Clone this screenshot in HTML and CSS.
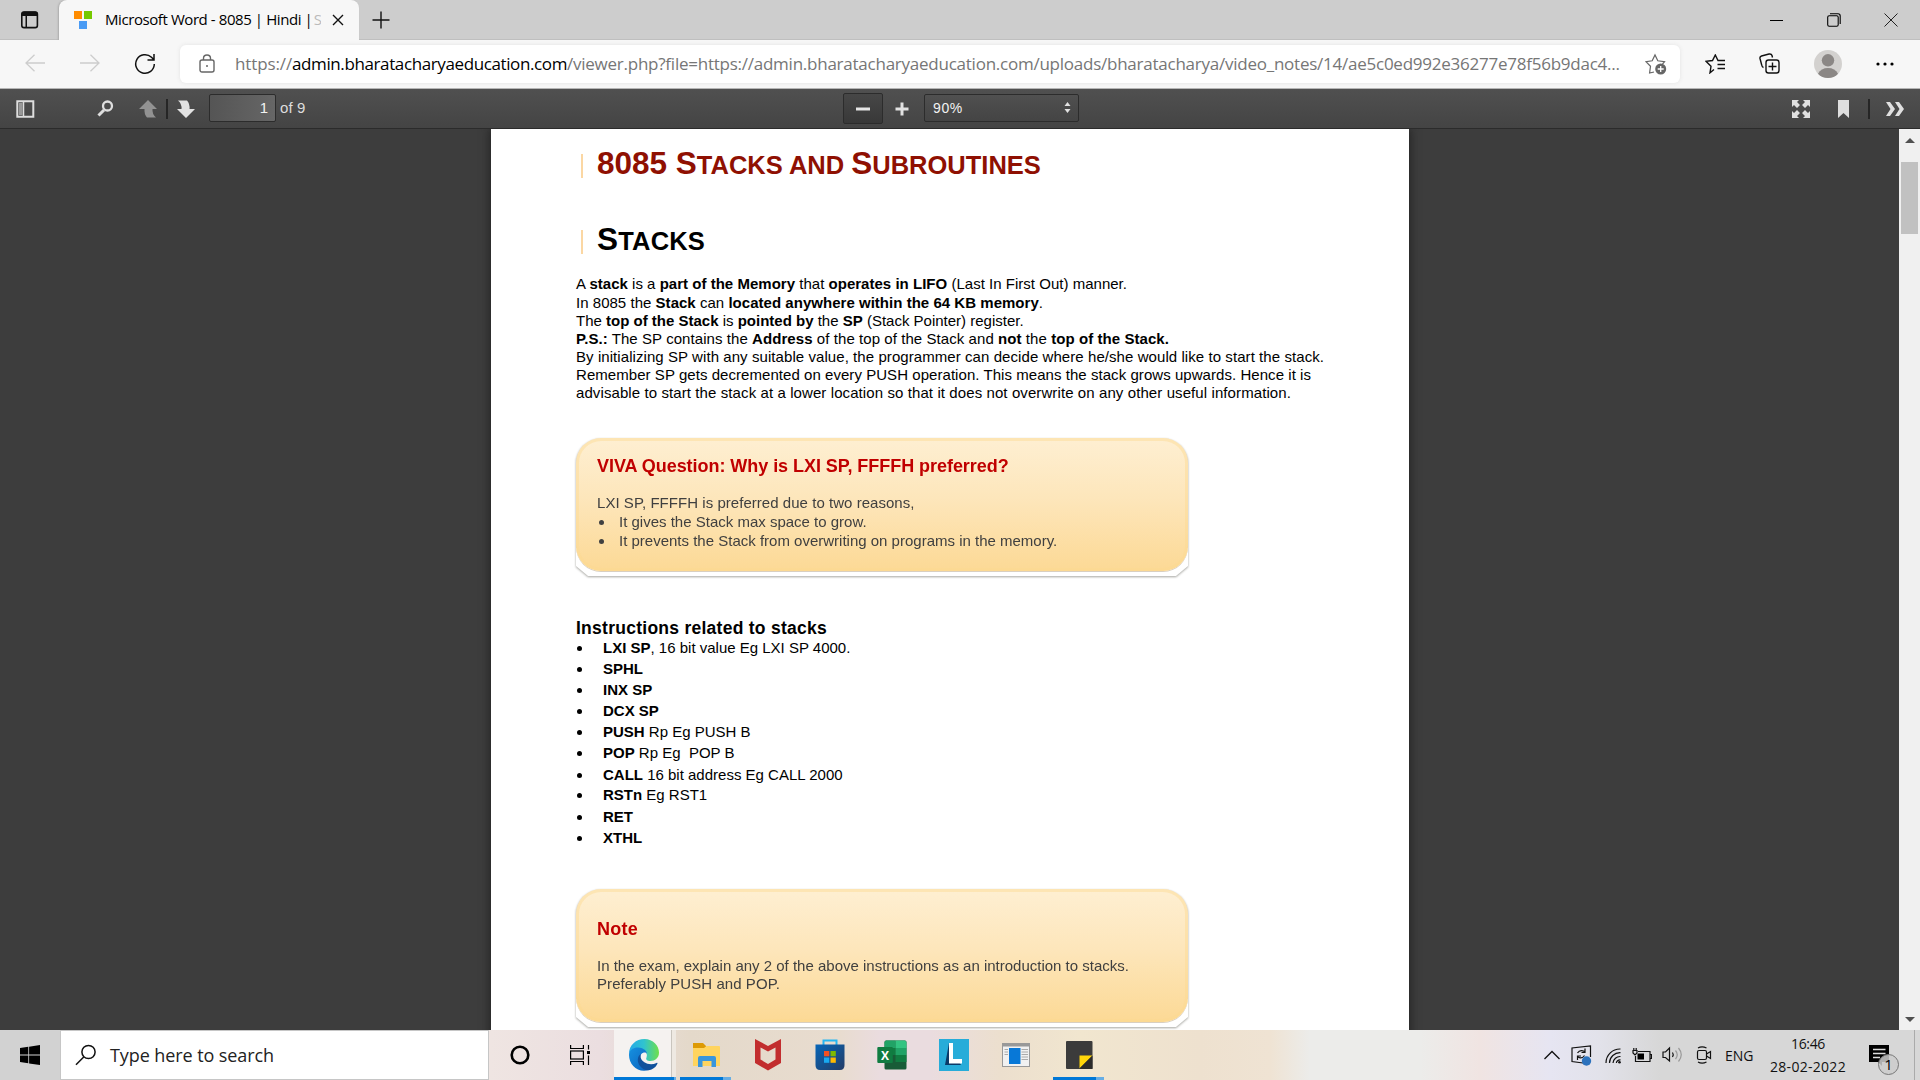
FILE: index.html
```html
<!DOCTYPE html>
<html lang="en">
<head>
<meta charset="utf-8">
<title>Microsoft Word - 8085 | Hindi</title>
<link rel="stylesheet" href="styles.css">
</head>
<body>
<div class="screen">
  <header class="tabstrip">
    <svg class="tab-actions" width="20" height="20" viewBox="0 0 20 20"><rect x="1.8" y="2" width="15.6" height="15.6" rx="2.2" fill="none" stroke="#111" stroke-width="1.6"/><path d="M1.5 3.5Q1.5 1.5 4 1.5H15Q17.8 1.5 17.8 4V6H1.5ZM5.5 6H7V17H5.5Z" fill="#111"/></svg>
    <div class="tab">
      <svg width="20" height="20" viewBox="0 0 20 20"><rect x="1" y="1" width="8" height="8" fill="#ff8c00"/><rect x="11" y="1" width="8" height="8" fill="#76c900"/><rect x="6" y="11" width="8" height="8" fill="#4a9bf4"/></svg>
      <span class="tab-title">Microsoft Word - 8085 | Hindi | <i>S</i></span>
      <svg width="12" height="12" viewBox="0 0 12 12" stroke="#111" stroke-width="1.4"><path d="M1 1L11 11M11 1L1 11"/></svg>
    </div>
    <svg class="new-tab" width="18" height="18" viewBox="0 0 18 18" stroke="#111" stroke-width="1.4"><path d="M9 .5V17.5M.5 9H17.5"/></svg>
    <div class="window-buttons">
      <svg width="14" height="14" viewBox="0 0 14 14" stroke="#000"><path d="M0 7.5H13"/></svg>
      <svg width="14" height="14" viewBox="0 0 14 14" fill="none" stroke="#000" stroke-width="1.1"><rect x=".7" y="2.7" width="10.5" height="10.5" rx="1.5"/><path d="M3 .7H11Q13.2 .7 13.2 3V11"/></svg>
      <svg width="14" height="14" viewBox="0 0 14 14" stroke="#222"><path d="M.5 .5L13.5 13.5M13.5 .5L.5 13.5"/></svg>
    </div>
  </header>

  <nav class="navbar">
    <svg class="back" width="20" height="18" viewBox="0 0 20 18" fill="none" stroke="#cdcdcd" stroke-width="1.3"><path d="M20 9H1M9.500 .7L1 9L9.500 17.300"/></svg>
    <svg class="forward" width="20" height="18" viewBox="0 0 20 18" fill="none" stroke="#cdcdcd" stroke-width="1.300"><path d="M0 9H19M10.500 .7L19 9L10.500 17.300"/></svg>
    <svg class="reload" width="22" height="22" viewBox="0 0 22 22" fill="none" stroke="#111" stroke-width="1.500"><path d="M20.300 11A9.300 9.300 0 1 1 17.500 4.300L19.700 6.500M20 1V7H13.500"/></svg>
    <div class="address">
      <svg class="lock" width="16" height="19" viewBox="0 0 16 19" fill="none" stroke="#666" stroke-width="1.400"><rect x="1" y="6" width="14" height="12" rx="2"/><path d="M4.500 6V4.300Q4.500 1 8 1T11.500 4.300V6"/><circle cx="8" cy="12" r="1" fill="#666" stroke="none"/></svg>
      <div class="url"><span class="u1">https://</span><span class="u2">admin.bharatacharyaeducation.com</span><span class="u3">/viewer.php?file=https://admin.bharatacharyaeducation.com/uploads/bharatacharya/video_notes/14/ae5c0ed992e36277e78f56b9dac4...</span></div>
      <svg class="fav" width="22" height="22" viewBox="0 0 22 22"><path d="M9 19L4.600 20L5.500 13.300L1 8.700L7.200 7.800L10 2L12.800 7.800L19.500 8.700L17.500 11" fill="none" stroke="#666" stroke-width="1.200"/><circle cx="15.700" cy="16" r="5.500" fill="#666"/><path d="M15.700 13V19M12.700 16H18.700" stroke="#fff" stroke-width="1.300"/></svg>
    </div>
    <svg class="favorites" width="21" height="20" viewBox="0 0 21 20" fill="none" stroke="#111" stroke-width="1.400"><path d="M9 15.500L5 18.800L6 12.300L1 7.300L7.500 6.500L10.300 1L13 6.500H20M12.500 10.500H20M12.500 14.500H20"/></svg>
    <svg class="collections" width="21" height="21" viewBox="0 0 21 21" fill="none" stroke="#111" stroke-width="1.400"><rect x="7" y="7" width="13" height="13" rx="2.500"/><path d="M13.500 9.500V17.500M9.500 13.500H17.500M4.500 14.500Q3 14 2.700 12L1 5.500Q.6 3.500 2.500 3L10 1Q12.500 .6 13 2.500L13.500 4.500"/></svg>
    <svg class="avatar" width="28" height="28" viewBox="0 0 28 28"><circle cx="14" cy="14" r="14" fill="#d3d1cf"/><circle cx="14" cy="10.300" r="6.200" fill="#8b8785"/><path d="M4 23.700Q7 18 14 18T24 23.700Q20 28 14 28T4 23.700" fill="#8b8785"/></svg>
    <svg class="more" width="18" height="4" viewBox="0 0 18 4"><circle cx="2" cy="2" r="1.600"/><circle cx="9" cy="2" r="1.600"/><circle cx="16" cy="2" r="1.600"/></svg>
  </nav>

  <div class="toolbar">
    <svg class="t-side" width="19" height="18" viewBox="0 0 19 18"><path d="M1.300 1.300H17.300V16.700H1.300Z" fill="none" stroke="#dedede" stroke-width="2"/><path d="M3 3H6.500V15H3Z" fill="#999"/><path d="M7.500 2V16" stroke="#dedede" stroke-width="1.500"/></svg>
    <svg class="t-find" width="17" height="17" viewBox="0 0 17 17" fill="none" stroke="#dedede"><circle cx="10.500" cy="6" r="4.500" stroke-width="2.300"/><path d="M7 10L1.500 15.500" stroke-width="3"/></svg>
    <svg class="t-up" width="18" height="18" viewBox="0 0 18 18"><path d="M9 0L18 9H13.500Q13 14 17 17.500H8Q5 14 5.500 9H0Z" fill="#929292"/></svg>
    <i class="t-sep"></i>
    <svg class="t-down" width="18" height="18" viewBox="0 0 18 18"><path d="M9 18L0 9H4.500Q5 4 1 .5H10Q13 4 12.500 9H18Z" fill="#e2e2e2"/></svg>
    <div class="page-number">1</div>
    <span class="page-count">of 9</span>
    <div class="zoom-out"><svg width="14" height="4"><rect width="14" height="3" y=".5" fill="#e6e6e6"/></svg></div>
    <svg class="zoom-in" width="14" height="14" viewBox="0 0 14 14"><path d="M5.500 .5H8.500V5.500H13.500V8.500H8.500V13.500H5.500V8.500H.5V5.500H5.500Z" fill="#e2e2e2"/></svg>
    <div class="scale"><span>90%</span><svg width="7" height="11" viewBox="0 0 7 11"><path d="M3.500 0L6.500 4H.5ZM3.500 11L6.500 7H.5Z" fill="#e2e2e2"/></svg></div>
    <svg class="t-full" width="18" height="18" viewBox="0 0 18 18" fill="#e0e0e0"><path d="M0 0H7L5 2L8 5L5 8L2 5L0 7Z"/><path d="M18 0V7L16 5L13 8L10 5L13 2L11 0Z"/><path d="M18 18H11L13 16L10 13L13 10L16 13L18 11Z"/><path d="M0 18V11L2 13L5 10L8 13L5 16L7 18Z"/></svg>
    <svg class="t-mark" width="11" height="18" viewBox="0 0 11 18"><path d="M0 0H11V18L5.500 13L0 18Z" fill="#dedede"/></svg>
    <i class="t-sep2"></i>
    <svg class="t-more" width="18" height="14" viewBox="0 0 18 14" fill="#e0e0e0"><path d="M0 0H4L9 7L4 14H0L4.500 7ZM9 0H13L18 7L13 14H9L13.500 7Z"/></svg>
  </div>

  <main class="viewer">
    <article class="page">
      <h1><i></i><span>8085 S<small>TACKS AND </small>S<small>UBROUTINES</small></span></h1>
      <h2><i></i><span>S<small>TACKS</small></span></h2>
      <section class="intro">
        <p class="p1">A <b>stack</b> is a <b>part of the Memory</b> that <b>operates in LIFO</b> (Last In First Out) manner.</p>
        <p class="p2">In 8085 the <b>Stack</b> can <b>located anywhere within the 64 KB memory</b>.</p>
        <p>The <b>top of the Stack</b> is <b>pointed by</b> the <b>SP</b> (Stack Pointer) register.</p>
        <p class="p4"><b>P.S.:</b> The SP contains the <b>Address</b> of the top of the Stack and <b>not</b> the <b>top of the Stack.</b></p>
        <p class="p5">By initializing SP with any suitable value, the programmer can decide where he/she would like to start the stack.</p>
        <p class="p6">Remember SP gets decremented on every PUSH operation. This means the stack grows upwards. Hence it is</p>
        <p class="p7">advisable to start the stack at a lower location so that it does not overwrite on any other useful information.</p>
      </section>
      <section class="box viva">
        <h3>VIVA Question: Why is LXI SP, FFFFH preferred?</h3>
        <p>LXI SP, FFFFH is preferred due to two reasons,</p>
        <ul>
          <li>It gives the Stack max space to grow.</li>
          <li>It prevents the Stack from overwriting on programs in the memory.</li>
        </ul>
      </section>
      <h4>Instructions related to stacks</h4>
      <ul class="instructions">
        <li><b>LXI SP</b>, 16 bit value Eg LXI SP 4000.</li>
        <li><b>SPHL</b></li>
        <li><b>INX SP</b></li>
        <li><b>DCX SP</b></li>
        <li><b>PUSH</b> Rp Eg PUSH B</li>
        <li><b>POP</b> Rp Eg&nbsp; POP B</li>
        <li class="call"><b>CALL</b> 16 bit address Eg CALL 2000</li>
        <li class="rst"><b>RSTn</b> Eg RST1</li>
        <li class="ret"><b>RET</b></li>
        <li><b>XTHL</b></li>
      </ul>
      <section class="box note">
        <h3>Note</h3>
        <p>In the exam, explain any 2 of the above instructions as an introduction to stacks.</p>
        <p class="last">Preferably PUSH and POP.</p>
      </section>
    </article>
    <div class="scrollbar">
      <svg width="10" height="5"><path d="M0 5L5 0L10 5Z" fill="#505050"/></svg>
      <i></i>
      <svg width="10" height="5"><path d="M0 0L5 5L10 0Z" fill="#505050"/></svg>
    </div>
  </main>

  <footer class="taskbar">
    <div class="start"><svg width="20" height="20" viewBox="0 0 20 20"><path d="M0 3L8.300 1.800V9.600H0ZM9.100 1.700L20 0V9.600H9.100ZM0 10.400H8.300V18.300L0 17.100ZM9.100 10.400H20V20L9.100 18.400Z"/></svg></div>
    <div class="search"><svg width="22" height="22" viewBox="0 0 22 22" fill="none" stroke="#111" stroke-width="1.500"><circle cx="13.500" cy="8" r="6.600"/><path d="M8.700 13L1 20.800"/></svg><span>Type here to search</span></div>
    <div class="cell cortana"><svg width="20" height="20" viewBox="0 0 20 20"><circle cx="10" cy="10" r="8.300" fill="none" stroke="#000" stroke-width="2.600"/></svg></div>
    <div class="cell"><svg width="22" height="20" viewBox="0 0 22 20" fill="none" stroke="#000" stroke-width="1.200"><path d="M1.600 0V3.500H14.400V0M1.600 20V16.500H14.400V20M19.500 0V4.500M19.500 10.500V20"/><rect x="1.600" y="6" width="12.800" height="8"/><path d="M18 6H21V9H18Z" fill="#000" stroke="none"/></svg></div>
    <div class="cell app edge">
      <svg width="32" height="32" viewBox="0 0 32 32"><defs><linearGradient id="ea" x1="0" x2="1"><stop offset="0" stop-color="#25a9e8"/><stop offset=".5" stop-color="#30c3cf"/><stop offset="1" stop-color="#6fe04a"/></linearGradient><linearGradient id="eb" x1="0" x2="1" y1="0" y2="1"><stop offset="0" stop-color="#1691e0"/><stop offset="1" stop-color="#0b61bd"/></linearGradient></defs><path d="M1 15C1 6 8 0 16.500 0C25 0 31 6.500 31 13.500C31 19 27 22 22.500 22C19 22 17.500 20.500 18.500 18.500C20.500 13 15 9 10 9C5 9 2 12 1 15Z" fill="url(#ea)"/><path d="M1 16C1 11 5 8.500 10 8.500C15 8.500 19 11.500 19 15C17 12 12 14 12 19.500C12 26 18 31 21 31C10 34.500 1 26 1 16Z" fill="url(#eb)"/><path d="M12.500 15C9 18 9 23 12 27C15 31 20 32 23.500 30.500C26.500 29 28.500 27 29.500 24.500C29.700 23.700 29 23.600 28.500 24C22 27 14 24 12.700 18.500Z" fill="#10519c"/></svg>
    </div>
    <div class="cell app on">
      <svg width="28" height="26" viewBox="0 0 28 26"><path d="M1 1H11L14 4V7H1Z" fill="#dd9a05"/><path d="M1 6H12L14.500 4H27Q28 4 28 5V24H1Z" fill="#ffd45e"/><path d="M6 25V16Q6 14 8 14H22Q24 14 24 16V25H19.500V19H10.500V25Z" fill="#3996dc"/></svg>
    </div>
    <div class="cell app"><svg width="28" height="32" viewBox="0 0 28 32"><path d="M1 0L14 7L27 0V24L14 31.500L1 24ZM6.500 8.500V20.500L14 25L21.500 20.500V8.500L14 12.500Z" fill="#c22d2e" fill-rule="evenodd"/></svg></div>
    <div class="cell app"><svg width="30" height="32" viewBox="0 0 30 32"><defs><linearGradient id="st" x2="1" y2="1"><stop stop-color="#0666b8"/><stop offset="1" stop-color="#243c66"/></linearGradient></defs><path d="M8.500 7V1.500H21.500V7" fill="none" stroke="#27b6f1" stroke-width="2"/><path d="M.5 5.500H29.500V26Q29.500 31 25 31H5Q.5 31 .5 26Z" fill="url(#st)"/><path d="M9 12H14.300V17.300H9Z" fill="#f25022"/><path d="M15.500 12H20.800V17.300H15.500Z" fill="#7fba00"/><path d="M9 18.500H14.300V23.800H9Z" fill="#19a9f0"/><path d="M15.500 18.500H20.800V23.800H15.500Z" fill="#ffb900"/></svg></div>
    <div class="cell app"><svg width="30" height="30" viewBox="0 0 30 30"><rect x="7.500" y=".5" width="22" height="29" rx="1.500" fill="#185c37"/><path d="M9 .5H18.500V8H7.500V2Z" fill="#21a366"/><path d="M18.500 .5H28L29.500 2V8H18.500Z" fill="#33c481"/><path d="M7.500 8H18.500V15H7.500Z" fill="#107c41"/><path d="M18.500 8H29.500V15H18.500Z" fill="#21a366"/><path d="M18.500 15H29.500V22H18.500Z" fill="#107c41"/><rect x=".3" y="7" width="15.500" height="16" rx="1" fill="#107c41"/><text x="8" y="19.500" text-anchor="middle" class="xl">X</text></svg></div>
    <div class="cell app"><svg width="30" height="32" viewBox="0 0 30 32"><rect width="30" height="32" fill="#27acd9"/><path d="M10 4L6 26H22L20 23H12Z" fill="#0b3a68"/><path d="M10 4H14V20H23V24.500H10Z" fill="#fff"/></svg></div>
    <div class="cell app"><svg width="28" height="24" viewBox="0 0 28 24"><rect x=".5" y=".5" width="27" height="23" fill="#f1f1f1" stroke="#999"/><path d="M1 1H27V3.500H1Z" fill="#999"/><path d="M2.500 6.500H6M2.500 9H6M2.500 11.500H6M19.500 6.500H26M19.500 9H26M19.500 11.500H26M19.500 14H26M19.500 16.500H26" stroke="#aaa"/><rect x="7" y="5" width="11.500" height="16" fill="#0878d7"/></svg></div>
    <div class="cell app on sticky"><svg width="28" height="30" viewBox="0 0 28 30"><rect x="1" y="1" width="26.500" height="28" rx="1" fill="#3b3b3b"/><path d="M14.500 15.500H27.500L14.500 28.500Z" fill="#ffd60a"/><path d="M27.500 15.500V29H14.500V28.500Z" fill="#2b2b2b"/></svg></div>
    <div class="tray">
      <svg class="chev" width="16" height="10" viewBox="0 0 16 10" fill="none" stroke="#111" stroke-width="1.300"><path d="M.5 9L8 1.500L15.500 9"/></svg>
      <svg class="sync" width="21" height="21" viewBox="0 0 21 21" fill="none" stroke="#111" stroke-width="1.200"><path d="M12 18L1 16.500V3L19.500 1V12M6.500 8Q9 4 13.500 6.500M14 3.500V7.500H10.500M13.500 10.500Q10.500 14.500 7 12M6.500 15V11H10"/><circle cx="15.500" cy="16" r="4.700" fill="#2c72bd" stroke="none"/></svg>
      <svg class="wifi" width="17" height="16" viewBox="0 0 17 16" fill="none" stroke="#111" stroke-width="1.200"><path d="M1 15A14 14 0 0 1 15.500 1M4.500 15A10.500 10.500 0 0 1 15.500 4.700M8 15A7 7 0 0 1 15.500 8.500M11.300 15A4 4 0 0 1 15.500 11.800"/><circle cx="14.500" cy="14.200" r="1.300" fill="#111" stroke="none"/></svg>
      <svg class="battery" width="20" height="15" viewBox="0 0 20 15" fill="none" stroke="#111" stroke-width="1.200"><path d="M6 3.500H18V13.500H3.500V8M18 6.500H19.500V10.500H18M1 2.500H5V5L3 7L1 5ZM1.800 2.500V0M4.200 2.500V0"/><path d="M5.500 5.500H12V11.500H5.500Z" fill="#000" stroke="none"/></svg>
      <svg class="sound" width="21" height="18" viewBox="0 0 21 18" fill="none" stroke="#111" stroke-width="1.200"><path d="M1 6H3.500L7.500 2V15L3.500 11.500H1ZM10.500 6.500Q12 8.700 10.500 11"/><path d="M13.500 4.500Q17 8.700 13.500 13M16.500 2Q22 8.700 16.500 15.500" stroke="#999"/></svg>
      <svg class="meet" width="16" height="18" viewBox="0 0 16 18" fill="none" stroke="#111" stroke-width="1.200"><rect x="1.500" y="4.500" width="9" height="9" rx="1.500"/><path d="M10.500 8L14.500 5.500V12.500L10.500 10M2 2Q6 -.3 10.500 2M2 16Q6 18.300 10.500 16"/></svg>
      <span class="lang">ENG</span>
      <div class="clock"><span class="time">16:46</span><span class="date">28-02-2022</span></div>
      <svg class="notice" width="31" height="32" viewBox="0 0 31 32"><path d="M0 1H20V18H13V22L9 18H0Z"/><path d="M4 5.500H16.500M4 9.500H16.500M4 13.500H11" stroke="#ddd" stroke-width="1.300"/><circle cx="19.500" cy="20.500" r="10" fill="#ccc" fill-opacity=".85" stroke="#777"/><text x="19.500" y="26" text-anchor="middle" class="badge">1</text></svg>
      <i class="peek"></i>
    </div>
  </footer>
</div>
</body>
</html>
```
FILE: styles.css
```css
* { box-sizing: border-box; margin: 0; padding: 0; }
body { width: 1920px; height: 1080px; overflow: hidden; font-family: "Open Sans", "Noto Sans", sans-serif; color: #000; }
svg { display: block; flex: none; }
.screen { display: flex; flex-direction: column; width: 1920px; height: 1080px; }

.tabstrip { display: flex; align-items: center; height: 40px; background: #cdcdcd; box-shadow: inset 0 -1px #bfbfbf; }
.tab-actions { margin: 0 20px; }
.tab { display: flex; align-items: center; width: 300px; height: 40px; margin-left: -1px; padding: 0 15px 0 14px; background: #f7f7f7; border-radius: 8px 8px 0 0; box-shadow: -1px 0 2px #aaa; clip-path: inset(0 -3px 0 -3px); }
.tab-title { width: 216px; margin: -2px 11px 0 12px; overflow: hidden; font-size: 15px; line-height: 22px; letter-spacing: -.42px; white-space: nowrap; }
.tab-title i { margin-left: -2px; color: #bbb; font-style: normal; }
.new-tab { margin-left: 13px; }
.window-buttons { display: flex; gap: 43px; margin: 0 22px 0 auto; }

.navbar { display: flex; align-items: center; height: 49px; padding-bottom: 1px; background: #f7f7f7; border-bottom: 1px solid #b5b5b5; }
.back { margin: 0 0 2px 25px; }
.forward { margin: 0 0 2px 35px; }
.reload { margin-left: 34px; }
.address { display: flex; align-items: center; width: 1500px; height: 38px; margin-left: 24px; background: #fff; border-radius: 6px; box-shadow: 0 0 4px #e3e3e3; }
.lock { margin-left: 19px; }
.url { width: 1384px; margin-left: 20px; font-size: 17px; line-height: 28px; color: #767676; white-space: nowrap; }
.u1 { letter-spacing: -.123px; }
.u2 { color: #000; letter-spacing: -.388px; }
.u3 { letter-spacing: -.242px; }
.fav { margin-left: 26px; }
.favorites { margin-left: 25px; }
.collections { margin-left: 33px; }
.avatar { margin-left: 34px; }
.more { margin-left: 34px; }

.toolbar { display: flex; align-items: center; height: 40px; background: linear-gradient(#505050, #444); border-bottom: 1px solid #2b2b2b; color: #ddd; font-family: "Liberation Sans", sans-serif; }
.t-side { margin-left: 16px; }
.t-find { margin-left: 62px; }
.t-up { margin-left: 25px; }
.t-sep, .t-sep2 { width: 2px; height: 20px; background: #262626; }
.t-sep { margin-left: 9px; }
.t-down { margin-left: 9px; }
.page-number { width: 67px; height: 28px; margin: 0 4px 2px 14px; padding-right: 7px; background: linear-gradient(90deg, #555, #666); border: 1px solid #2c2c2c; border-radius: 2px; font-size: 15px; line-height: 26px; text-align: right; color: #f2f2f2; }
.page-count { width: 32px; margin-bottom: 2px; font-size: 15px; letter-spacing: .1px; }
.zoom-out { display: flex; align-items: center; justify-content: center; width: 40px; height: 31px; margin-left: 531px; background: linear-gradient(#474747, #383838); border: 1px solid #2c2c2c; border-radius: 2px; }
.zoom-in { margin-left: 12px; }
.scale { display: flex; align-items: center; justify-content: space-between; width: 155px; height: 28px; margin: 0 0 2px 15px; padding: 0 7px 0 8px; border: 1px solid #2c2c2c; border-radius: 2px; background: linear-gradient(#505050, #444); color: #f2f2f2; font-size: 14px; letter-spacing: .6px; }
.t-full { margin-left: auto; }
.t-mark { margin-left: 28px; }
.t-sep2 { margin-left: 19px; }
.t-more { margin: 0 16px; }

.viewer { display: flex; height: 901px; overflow: hidden; background: #3d3d3d; }
.page { width: 918px; height: 940px; margin-left: 491px; padding: 16px 0 0 85px; background: #fff; box-shadow: 0 0 9px 1px #222; font: 15px/18px "Liberation Sans", sans-serif; }
.page h1, .page h2 { display: flex; align-items: center; height: 36px; font-size: 31.5px; line-height: 36px; }
.page h1 { color: #8f1002; }
.page h2 { margin-top: 40px; }
.page h2 span { letter-spacing: .17px; }
.page small { font-size: 25.5px; line-height: 1; }
.page h1 i, .page h2 i { width: 2px; height: 24px; margin: 6px 14px 0 5px; background: #fbd7a3; }
.page ul { list-style: none; }
.page li { display: flex; align-items: center; white-space: pre; }
.page li::before { content: ""; flex: none; width: 5px; height: 5px; border-radius: 50%; background: currentColor; }
.intro { margin-top: 18px; }
.intro p { white-space: nowrap; }
.intro .p1 { height: 19px; letter-spacing: .02px; }
.p2 { letter-spacing: .028px; }
.p4 { letter-spacing: .069px; }
.p5 { letter-spacing: .07px; }
.p6 { letter-spacing: .052px; }
.p7 { letter-spacing: .094px; }

/* Cards: a gradient face lying on a white plate with cut lower corners */
.box { position: relative; z-index: 0; width: 612px; height: 133px; padding-left: 21px; color: #404040; filter: drop-shadow(0 1px 1px #a5a5a0); }
.box::before { content: ""; position: absolute; z-index: -2; inset: 110px 0 -5px; background: #fff; clip-path: polygon(0 0, 100% 0, 100% 18px, calc(100% - 12px) 100%, 12px 100%, 0 18px); }
.box::after { content: ""; position: absolute; z-index: -1; inset: 0; border-radius: 25px; background: linear-gradient(#feefd2, #fde6bb 45%, #fcd995); box-shadow: inset 0 0 0 3px rgba(253, 218, 145, .45), 0 1px 0 #d9cfc0; }
.box h3 { color: #c00000; font-size: 18px; line-height: 22px; }
.viva { margin-top: 36px; padding-top: 17px; line-height: 19px; }
.viva h3 { margin-bottom: 16px; letter-spacing: -.045px; }
.viva p { letter-spacing: .039px; }
.viva li::before { margin: 2px 15px 0 2px; }
.page h4 { margin: 47px 0 -1px; font-size: 17.5px; line-height: 20px; letter-spacing: .262px; }
.instructions { line-height: 21px; }
.instructions li::before { margin: 2px 21px 0 1px; }
.instructions .call { margin-top: 1px; }
.instructions .rst { margin-top: -1px; }
.instructions .ret { margin-top: 1px; }
.note { margin-top: 41px; padding-top: 29px; }
.note h3 { margin-bottom: 17px; letter-spacing: .25px; }
.last { letter-spacing: .063px; }
.scrollbar { display: flex; flex-direction: column; align-items: center; width: 21px; height: 901px; margin-left: auto; padding: 9px 0 8px; background: #f0f0f0; }
.scrollbar i { width: 17px; height: 72px; margin: 19px 0 auto; background: #c1c1c1; }

.taskbar { display: flex; height: 50px; background: linear-gradient(90deg, #d2d2d2 0, #d2d2d2 60px, #efe5e2 490px, #ebdee0 600px, #e4d9ca 690px, #e8dccf 840px, #eadcdf 880px, #eadcdf 930px, #ecdfce 1000px, #f1e6cf 1080px, #eee1cf 1200px, #efe3d3 1270px, #ececea 1310px, #ececea 1420px, #f0e4e2 1480px, #e6e5f2 1550px, #e2e2ea 1600px, #d7d7d7 1660px, #d7d7d7); }
.start { display: flex; align-items: center; justify-content: center; width: 60px; }
.search { display: flex; align-items: center; width: 429px; height: 50px; padding-left: 14px; background: #fff; border: 1px solid #c6c6c6; }
.search span { margin: 0 0 1px 13px; font-size: 18px; letter-spacing: -.086px; color: #222; }
.cell { display: flex; align-items: center; justify-content: center; width: 62px; height: 50px; }
.cortana { margin-right: -2px; }
.app { border-bottom: 3px solid transparent; padding-top: 3px; }
.edge { background: linear-gradient(90deg, #f5f2f0 57px, #c9c5be 57px, #c9c5be 58px, #eee9e2 58px); border-image: linear-gradient(90deg, #0078d7 57px, #66ade5 57px) 3; margin: 0 -1px 0 3px; padding-right: 2px; }
.on { width: 51px; margin: 0 6px 0 5px; border-image: linear-gradient(90deg, #0078d7 41px, #66ade5 41px) 3; }
.sticky { margin-left: 6px; }
.xl { font: bold 12px "Open Sans", sans-serif; fill: #fff; }
.tray { display: flex; align-items: center; margin-left: auto; color: #111; }
.sync { margin-left: 11px; }
.wifi { margin: 2px 0 0 13px; }
.battery { margin-left: 10px; }
.sound { margin-left: 10px; }
.meet { margin-left: 13px; }
.lang { width: 30px; margin: 0 0 0 13px; font-size: 14px; }
.clock { display: flex; flex-direction: column; align-items: center; width: 80px; margin: 0 0 1px 13px; font-size: 14px; line-height: 23px; }
.time { letter-spacing: -.34px; }
.date { letter-spacing: .29px; }
.notice { margin: 9px 0 0 21px; }
.badge { font: 15px "Open Sans", sans-serif; }
.peek { width: 1px; height: 50px; margin: 0 5px 0 14px; background: #aaa; }
```
